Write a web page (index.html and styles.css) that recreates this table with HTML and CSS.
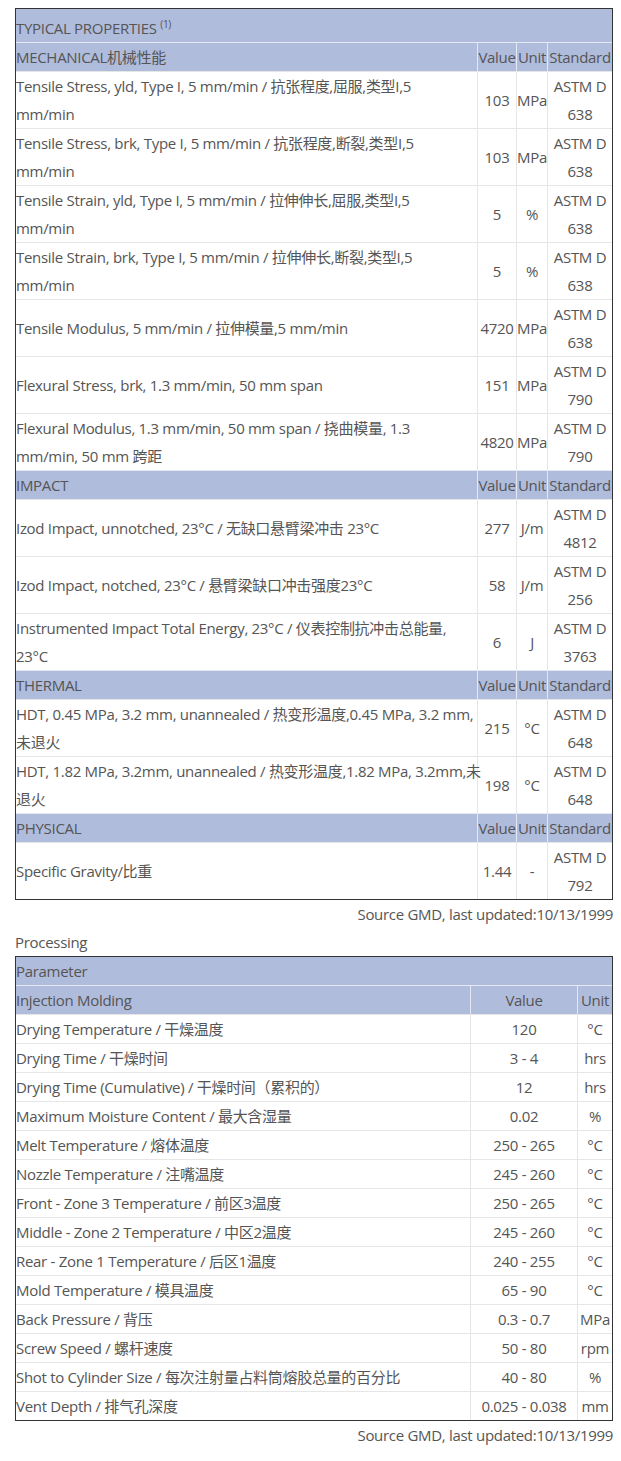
FILE: index.html
```html
<!DOCTYPE html>
<html>
<head>
  <meta http-equiv="Content-Type" content="text/html; charset=UTF-8">
  <meta name="viewport" content="width=device-width,initial-scale=1">
  <title>Typical Properties</title>
  <link rel="stylesheet" href="styles.css">
</head>
<body>
  <div class="content">

    <table class="prop">
      <colgroup>
        <col class="c_desc"><col class="c_val"><col class="c_unit"><col class="c_std">
      </colgroup>
      <tr class="head">
        <td class="top" colspan="4">TYPICAL PROPERTIES <sup>(1)</sup></td>
      </tr>
      <tr class="head">
        <td>MECHANICAL机械性能</td><td class="mid">Value</td><td class="mid">Unit</td><td class="mid">Standard</td>
      </tr>
      <tr>
        <td class="desc">Tensile Stress, yld, Type I, 5 mm/min / 抗张程度,屈服,类型I,5<br>mm/min</td><td class="mid">103</td><td class="mid">MPa</td><td class="mid">ASTM D 638</td>
      </tr>
      <tr>
        <td class="desc">Tensile Stress, brk, Type I, 5 mm/min / 抗张程度,断裂,类型I,5<br>mm/min</td><td class="mid">103</td><td class="mid">MPa</td><td class="mid">ASTM D 638</td>
      </tr>
      <tr>
        <td class="desc">Tensile Strain, yld, Type I, 5 mm/min / 拉伸伸长,屈服,类型I,5<br>mm/min</td><td class="mid">5</td><td class="mid">%</td><td class="mid">ASTM D 638</td>
      </tr>
      <tr>
        <td class="desc">Tensile Strain, brk, Type I, 5 mm/min / 拉伸伸长,断裂,类型I,5<br>mm/min</td><td class="mid">5</td><td class="mid">%</td><td class="mid">ASTM D 638</td>
      </tr>
      <tr>
        <td class="desc">Tensile Modulus, 5 mm/min / 拉伸模量,5 mm/min</td><td class="mid">4720</td><td class="mid">MPa</td><td class="mid">ASTM D 638</td>
      </tr>
      <tr>
        <td class="desc">Flexural Stress, brk, 1.3 mm/min, 50 mm span</td><td class="mid">151</td><td class="mid">MPa</td><td class="mid">ASTM D 790</td>
      </tr>
      <tr>
        <td class="desc">Flexural Modulus, 1.3 mm/min, 50 mm span / 挠曲模量, 1.3<br>mm/min, 50 mm 跨距</td><td class="mid">4820</td><td class="mid">MPa</td><td class="mid">ASTM D 790</td>
      </tr>
      <tr class="head">
        <td>IMPACT</td><td class="mid">Value</td><td class="mid">Unit</td><td class="mid">Standard</td>
      </tr>
      <tr>
        <td class="desc">Izod Impact, unnotched, 23°C / 无缺口悬臂梁冲击 23°C</td><td class="mid">277</td><td class="mid">J/m</td><td class="mid">ASTM D 4812</td>
      </tr>
      <tr>
        <td class="desc">Izod Impact, notched, 23°C / 悬臂梁缺口冲击强度23°C</td><td class="mid">58</td><td class="mid">J/m</td><td class="mid">ASTM D 256</td>
      </tr>
      <tr>
        <td class="desc">Instrumented Impact Total Energy, 23°C / 仪表控制抗冲击总能量,<br>23°C</td><td class="mid">6</td><td class="mid">J</td><td class="mid">ASTM D 3763</td>
      </tr>
      <tr class="head">
        <td>THERMAL</td><td class="mid">Value</td><td class="mid">Unit</td><td class="mid">Standard</td>
      </tr>
      <tr>
        <td class="desc">HDT, 0.45 MPa, 3.2 mm, unannealed / 热变形温度,0.45 MPa, 3.2 mm,<br>未退火</td><td class="mid">215</td><td class="mid">°C</td><td class="mid">ASTM D 648</td>
      </tr>
      <tr>
        <td class="desc">HDT, 1.82 MPa, 3.2mm, unannealed / 热变形温度,1.82 MPa, 3.2mm,未<br>退火</td><td class="mid">198</td><td class="mid">°C</td><td class="mid">ASTM D 648</td>
      </tr>
      <tr class="head">
        <td>PHYSICAL</td><td class="mid">Value</td><td class="mid">Unit</td><td class="mid">Standard</td>
      </tr>
      <tr>
        <td class="desc">Specific Gravity/比重</td><td class="mid">1.44</td><td class="mid">-</td><td class="mid">ASTM D 792</td>
      </tr>
    </table>
    <div class="source">Source GMD, last updated:10/13/1999</div>

    <div class="section_title">Processing</div>
    <table class="prop">
      <colgroup>
        <col class="p_desc"><col class="p_val"><col class="p_unit">
      </colgroup>
      <tr class="head">
        <td colspan="3">Parameter</td>
      </tr>
      <tr class="head">
        <td>Injection Molding</td><td class="mid">Value</td><td class="mid">Unit</td>
      </tr>
      <tr><td>Drying Temperature / 干燥温度</td><td class="mid">120</td><td class="mid">°C</td></tr>
      <tr><td>Drying Time / 干燥时间</td><td class="mid">3 - 4</td><td class="mid">hrs</td></tr>
      <tr><td>Drying Time (Cumulative) / 干燥时间（累积的）</td><td class="mid">12</td><td class="mid">hrs</td></tr>
      <tr><td>Maximum Moisture Content / 最大含湿量</td><td class="mid">0.02</td><td class="mid">%</td></tr>
      <tr><td>Melt Temperature / 熔体温度</td><td class="mid">250 - 265</td><td class="mid">°C</td></tr>
      <tr><td>Nozzle Temperature / 注嘴温度</td><td class="mid">245 - 260</td><td class="mid">°C</td></tr>
      <tr><td>Front - Zone 3 Temperature / 前区3温度</td><td class="mid">250 - 265</td><td class="mid">°C</td></tr>
      <tr><td>Middle - Zone 2 Temperature / 中区2温度</td><td class="mid">245 - 260</td><td class="mid">°C</td></tr>
      <tr><td>Rear - Zone 1 Temperature / 后区1温度</td><td class="mid">240 - 255</td><td class="mid">°C</td></tr>
      <tr><td>Mold Temperature / 模具温度</td><td class="mid">65 - 90</td><td class="mid">°C</td></tr>
      <tr><td>Back Pressure / 背压</td><td class="mid">0.3 - 0.7</td><td class="mid">MPa</td></tr>
      <tr><td>Screw Speed / 螺杆速度</td><td class="mid">50 - 80</td><td class="mid">rpm</td></tr>
      <tr><td>Shot to Cylinder Size / 每次注射量占料筒熔胶总量的百分比</td><td class="mid">40 - 80</td><td class="mid">%</td></tr>
      <tr><td>Vent Depth / 排气孔深度</td><td class="mid">0.025 - 0.038</td><td class="mid">mm</td></tr>
    </table>
    <div class="source">Source GMD, last updated:10/13/1999</div>

  </div>
</body>
</html>
```

FILE: styles.css
```css
body {
  margin: 0;
  background-color: #FFFFFF;
  color: #555;
  font-family: "Open Sans", "Noto Sans CJK SC", sans-serif;
  font-size: 15px;
  letter-spacing: -0.3px;
  line-height: 28px;
}
.content {
  padding: 8px 8px 0 15px;
}
.prop {
  width: 100%;
  table-layout: fixed;
  border-collapse: separate;
  border-spacing: 0;
  border: 1px solid #333;
}
.prop td {
  padding: 0;
  vertical-align: middle;
  text-align: left;
  border-top: 1px solid #e6e6e6;
  border-left: 1px solid #e6e6e6;
}
.prop td:first-child {
  border-left: 0;
}
.prop tr:first-child td {
  border-top: 0;
}
.prop td.desc {
  white-space: nowrap;
}
.prop .head td {
  background-color: #b0bcdc;
  border-color: #e4e8f2;
}
.prop .head td.top {
  padding-top: 5px;
  height: 28px;
}
.prop .mid {
  text-align: center;
}
.prop sup {
  font-size: 10px;
  line-height: 0;
}
.c_desc { width: 461px; }
.c_val { width: 39px; }
.c_unit { width: 31px; }
.c_std { width: 65px; }
.p_desc { width: 454px; }
.p_val { width: 107px; }
.p_unit { width: 35px; }

.source {
  text-align: right;
}
.section_title {
  text-align: left;
}
```
